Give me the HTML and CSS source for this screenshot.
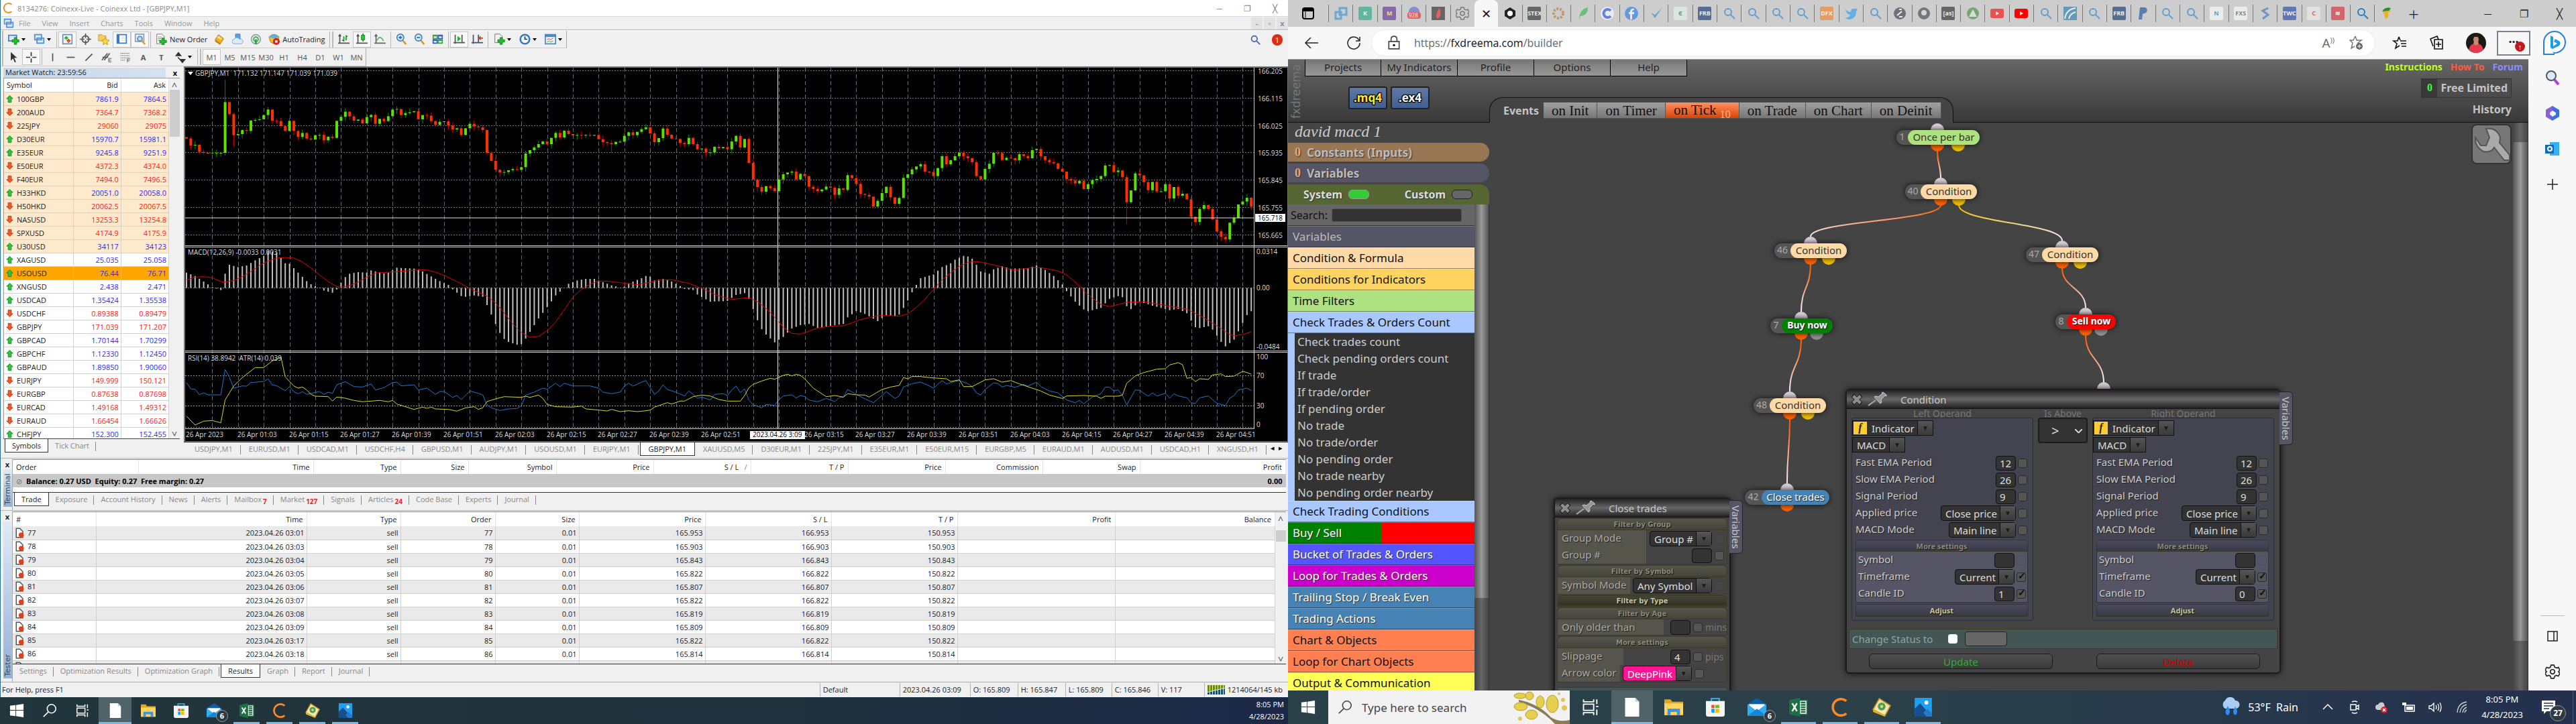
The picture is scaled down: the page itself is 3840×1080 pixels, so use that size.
FILE: index.html
```html
<!DOCTYPE html>
<html lang="en">
<head>
<meta charset="utf-8">
<title>Trading desktop</title>
<link rel="stylesheet" href="styles.css">
</head>
<body>
<svg class="sprite" aria-hidden="true">
  <symbol id="i-plus-chart" viewBox="0 0 20 20"><path d="M1 3h14v10H1z" fill="#dce9f7" stroke="#4b7fb5" stroke-width="2"/><path d="M11 7h4v4h4v4h-4v4h-4v-4H7v-4h4z" fill="#1fc12c" stroke="#0b7a17"/></symbol>
  <symbol id="i-profiles" viewBox="0 0 20 20"><path d="M2 2h12v9H2zM6 8h12v9H6z" fill="#dce9f7" stroke="#4b8fd5" stroke-width="2"/></symbol>
  <symbol id="i-watch" viewBox="0 0 20 20"><path d="M2 2h16v16H2z" fill="#fff" stroke="#5b93c9" stroke-width="2"/><path d="M4 8l4-4 4 4-4 3z" fill="#27b43a"/><path d="M8 12l4-3 4 3-4 5z" fill="#ef4d20"/></symbol>
  <symbol id="i-target" viewBox="0 0 20 20"><circle cx="10" cy="10" r="6" fill="none" stroke="#555" stroke-width="2"/><path d="M10 0v8M10 12v8M0 10h8M12 10h8" stroke="#555" stroke-width="2"/></symbol>
  <symbol id="i-star-folder" viewBox="0 0 20 20"><path d="M1 2h6l2 2h5v9H1z" fill="#f7cf58" stroke="#c79a22"/><path d="M13 7l2 4 5 1-4 3 1 5-4-3-4 3 1-5-4-3 5-1z" fill="#ffd93b" stroke="#c08f12"/></symbol>
  <symbol id="i-panel" viewBox="0 0 20 20"><path d="M2 2h16v15H2z" fill="#fff" stroke="#3d79c2" stroke-width="2"/><path d="M2 2h4v15H2z" fill="#3d79c2"/><path d="M9 6h8M9 9h8M9 12h8" stroke="#c6d5e6"/></symbol>
  <symbol id="i-tester" viewBox="0 0 20 20"><path d="M2 1h15v13H2z" fill="#e8eef5" stroke="#8aa2bd" stroke-width="2"/><circle cx="10" cy="9" r="4" fill="#bfe0fb" stroke="#4c86c4" stroke-width="2"/><path d="M13 12l6 7" stroke="#e0a22c" stroke-width="3"/></symbol>
  <symbol id="i-order" viewBox="0 0 20 20"><path d="M2 1h9l4 4v13H2z" fill="#fafafa" stroke="#666"/><path d="M4 6h7M4 9h6M4 12h4" stroke="#777"/><path d="M11 8h4v4h4v4h-4v4h-4v-4H7v-4h4z" fill="#1fc12c" stroke="#0b7a17"/></symbol>
  <symbol id="i-diamond" viewBox="0 0 20 20"><path d="M8 2l9 7-6 9-9-7z" fill="#f0b020" stroke="#a8700c"/><path d="M2 11l9 7v2l-9-6z" fill="#b87a14"/><path d="M8 4l6 5-2 2-7-4z" fill="#ffe08a"/></symbol>
  <symbol id="i-cloud" viewBox="0 0 20 20"><path d="M6 1h8v10H6z" fill="#4fa3e8" stroke="#2c75b8"/><path d="M4 18a4 4 0 0 1 0-8 5 5 0 0 1 9 0 4 4 0 0 1 3 8z" fill="#dcecfb" stroke="#6e9cc8"/></symbol>
  <symbol id="i-signal" viewBox="0 0 20 20"><circle cx="10" cy="10" r="8" fill="#e7efe9" stroke="#8ca5a0" stroke-width="2"/><circle cx="10" cy="10" r="4" fill="none" stroke="#3da24d" stroke-width="2"/><path d="M10 10v9" stroke="#2a9a3c" stroke-width="3"/></symbol>
  <symbol id="i-auto" viewBox="0 0 20 20"><path d="M1 6q9-9 18 0l-3 9q-6 5-12 0z" fill="#f3bd2c" stroke="#a37510"/><path d="M2 5q8-7 16 0l-4 3H6z" fill="#5ab0e4"/><circle cx="14" cy="14" r="6" fill="#df2216"/><path d="M12 12h4v4h-4z" fill="#fff"/></symbol>
  <symbol id="i-bars" viewBox="0 0 20 20"><path d="M3 2v16M0 17h20M1 5l2-3 2 3" stroke="#555" stroke-width="2" fill="none"/><path d="M10 5v9M14 3v9M10 12h-3M14 5h3" stroke="#159b22" stroke-width="2"/></symbol>
  <symbol id="i-candle" viewBox="0 0 20 20"><path d="M3 2v16M0 17h20M1 5l2-3 2 3" stroke="#555" stroke-width="2" fill="none"/><path d="M12 0v14" stroke="#157a22" stroke-width="2"/><path d="M9 3h6v8H9z" fill="#1fcf30" stroke="#157a22"/></symbol>
  <symbol id="i-line" viewBox="0 0 20 20"><path d="M3 2v16M0 17h20M1 5l2-3 2 3" stroke="#666" stroke-width="2" fill="none"/><path d="M4 13q6-12 12 0" stroke="#5fae68" stroke-width="2" fill="none"/></symbol>
  <symbol id="i-zin" viewBox="0 0 20 20"><circle cx="8" cy="7" r="6" fill="#d9efff" stroke="#3f82cc" stroke-width="2"/><path d="M5 7h6M8 4v6" stroke="#2468b4" stroke-width="2"/><path d="M12 12l6 7" stroke="#d29a2a" stroke-width="3"/></symbol>
  <symbol id="i-zout" viewBox="0 0 20 20"><circle cx="8" cy="7" r="6" fill="#d9efff" stroke="#3f82cc" stroke-width="2"/><path d="M5 7h6" stroke="#2468b4" stroke-width="2"/><path d="M12 12l6 7" stroke="#d29a2a" stroke-width="3"/></symbol>
  <symbol id="i-tile" viewBox="0 0 20 20"><path d="M1 2h9v8H1zM10 10h9v8h-9z" fill="#3aa92a"/><path d="M10 2h9v8h-9zM1 10h9v8H1z" fill="#2f63c4"/><path d="M3 5h5v3H3zM12 5h5v3h-5zM3 13h5v3H3zM12 13h5v3h-5z" fill="#e7f2ff"/></symbol>
  <symbol id="i-scroll" viewBox="0 0 20 20"><path d="M3 2v16M0 16h20M15 2v14" stroke="#555" stroke-width="2" fill="none"/><path d="M7 4l6 5-6 5z" fill="#1bb32b"/></symbol>
  <symbol id="i-shift" viewBox="0 0 20 20"><path d="M3 2v16M0 16h20M12 2v14" stroke="#456" stroke-width="2" fill="none"/><path d="M20 8h-7M16 5l-3 3 3 3" stroke="#c2452b" stroke-width="2" fill="none"/></symbol>
  <symbol id="i-ind" viewBox="0 0 20 20"><path d="M2 1h9l4 4v11H2z" fill="#f4f4f4" stroke="#666"/><path d="M11 7h4v4h4v4h-4v4h-4v-4H7v-4h4z" fill="#1fc12c" stroke="#0b7a17"/></symbol>
  <symbol id="i-clock" viewBox="0 0 20 20"><circle cx="10" cy="10" r="8" fill="#fff" stroke="#2f78cf" stroke-width="3"/><path d="M10 5v5h4" stroke="#234" stroke-width="2" fill="none"/></symbol>
  <symbol id="i-tpl" viewBox="0 0 20 20"><path d="M1 2h18v16H1z" fill="#eef5fc" stroke="#4a88c8" stroke-width="2"/><path d="M1 2h18v4H1z" fill="#4a88c8"/><path d="M4 11l3-2 3 2 5-3" stroke="#c33" fill="none"/><path d="M4 15l3-2 3 2 5-2" stroke="#2a2" fill="none"/></symbol>
  <symbol id="i-cursor" viewBox="0 0 20 20"><path d="M6 1v15l4-4 3 7 2-1-3-7h5z" fill="#333"/></symbol>
  <symbol id="i-cross" viewBox="0 0 20 20"><path d="M10 1v7M10 12v7M1 10h7M12 10h7" stroke="#333" stroke-width="2"/></symbol>
  <symbol id="i-vl" viewBox="0 0 20 20"><path d="M10 3v14" stroke="#555" stroke-width="2"/></symbol>
  <symbol id="i-hl" viewBox="0 0 20 20"><path d="M3 10h14" stroke="#555" stroke-width="2"/></symbol>
  <symbol id="i-tl" viewBox="0 0 20 20"><path d="M4 16L16 4" stroke="#555" stroke-width="2"/></symbol>
  <symbol id="i-eq" viewBox="0 0 20 20"><path d="M1 15L11 3M5 15L15 3M2 10h10" stroke="#555" stroke-width="2"/><path d="M13 12h5M13 15h4M13 18h5M13 12v6" stroke="#444"/></symbol>
  <symbol id="i-fib" viewBox="0 0 20 20"><path d="M2 3h16M2 7h16M2 11h16M2 15h9" stroke="#555" stroke-dasharray="2 1"/><path d="M14 13h5M14 16h4M14 13v6" stroke="#444"/></symbol>
  <symbol id="i-shapes" viewBox="0 0 20 20"><path d="M3 7l4-5 4 5zM10 14h8l-4 5zM6 10l5 5" fill="#333" stroke="#333" stroke-width="2"/></symbol>
  <symbol id="i-mag" viewBox="0 0 20 20"><circle cx="8" cy="8" r="5" fill="none" stroke="currentColor" stroke-width="2"/><path d="M12 12l6 6" stroke="currentColor" stroke-width="2"/></symbol>
  <symbol id="i-doc" viewBox="0 0 20 20"><path d="M3 1h7l6 6v12H3z" fill="#fff" stroke="#555" stroke-width="2"/><circle cx="13" cy="14" r="5" fill="#e2401a"/></symbol>
  <symbol id="i-gear" viewBox="0 0 20 20"><path d="M8 1h4l1 3 3 1 2-1 2 4-2 2 2 2-2 4-3-1-2 1-1 3H8l-1-3-2-1-3 1-2-4 2-2-2-2 2-4 3 1 2-1z" fill="none" stroke="currentColor" stroke-width="1.5"/><circle cx="10" cy="10" r="3" fill="none" stroke="currentColor" stroke-width="1.5"/></symbol>
  <symbol id="t-start" viewBox="0 0 24 24"><path d="M1 4l9-1v8H1zM11 3l12-2v10H11zM1 12h9v9l-9-1zM11 12h12v11l-12-2z" fill="#fff"/></symbol>
  <symbol id="t-mag" viewBox="0 0 24 24"><circle cx="15" cy="9" r="7" fill="none" stroke="currentColor" stroke-width="1.7"/><path d="M10 14L2 22" stroke="currentColor" stroke-width="1.7"/></symbol>
  <symbol id="t-view" viewBox="0 0 24 24"><path d="M3 2v3h13V2M3 22v-3h13v3M3 8h13v8H3zM20 2v6M20 15v7M19 11h3" fill="none" stroke="#fff" stroke-width="1.6"/></symbol>
  <symbol id="t-doc" viewBox="0 0 24 24"><path d="M3 0h13l5 5v19H3z" fill="#fff"/><path d="M16 0v5h5" fill="#ccc"/></symbol>
  <symbol id="t-folder" viewBox="0 0 24 24"><path d="M0 2h8l2 3h14v17H0z" fill="#e2a51e"/><path d="M0 7h24v15H0z" fill="#ffd562"/><path d="M4 22v-8h16v8h-4v-4H8v4z" fill="#3d93de"/></symbol>
  <symbol id="t-store" viewBox="0 0 24 24"><path d="M7 5V1h10v4" fill="none" stroke="#29a9ea" stroke-width="2"/><path d="M0 4h24v17q0 3-3 3H3q-3 0-3-3z" fill="#f5f5f5"/><path d="M7 9h4v4H7z" fill="#f25022"/><path d="M12 9h5v4h-5z" fill="#7fba00"/><path d="M7 14h4v5H7z" fill="#00a4ef"/><path d="M12 14h5v5h-5z" fill="#ffb900"/></symbol>
  <symbol id="t-mail" viewBox="0 0 24 24"><path d="M0 8l12-8 12 8v15H0z" fill="#0a5ea8"/><path d="M2 8h20v9H2z" fill="#fff"/><path d="M0 8l12 9 12-9v15H0z" fill="#2fb0f2"/><path d="M0 23l12-9 12 9z" fill="#1287d8"/></symbol>
  <symbol id="t-excel" viewBox="0 0 24 24"><path d="M12 3h11v18H12z" fill="#fff" stroke="#1d7044" stroke-width="1.5"/><path d="M15 6h6M15 9h6M15 12h6M15 15h6M15 18h6" stroke="#1d7044" stroke-width="2"/><path d="M0 3l14-3v24L0 21z" fill="#1d7044"/><path d="M4 7l6 10M10 7L4 17" stroke="#fff" stroke-width="2"/></symbol>
  <symbol id="t-c" viewBox="0 0 24 24"><path d="M20 4a10.500 10.500 0 1 0 0 16" fill="none" stroke="#ff8a1c" stroke-width="3"/></symbol>
  <symbol id="t-mt" viewBox="0 0 24 24"><path d="M9 1l14 9-7 13L1 15z" fill="#f4e7b0" stroke="#c99b1e" stroke-width="1.500"/><path d="M1 15l15 8v1L1 18z" fill="#e3b521"/><circle cx="12" cy="11" r="5" fill="#4b9d5c"/><circle cx="12" cy="11" r="2" fill="#e9d463"/></symbol>
  <symbol id="t-photo" viewBox="0 0 24 24"><path d="M1 0h22v24H1z" fill="#1f9ff0"/><path d="M1 14l7-7 15 17H1z" fill="#174e8c"/><path d="M12 19l5-5 6 6v4h-7z" fill="#2a77c4"/><circle cx="16" cy="6" r="2.500" fill="#fff"/></symbol>
  <symbol id="i-pin" viewBox="0 0 30 24"><path d="M1 21l11-8" stroke="#aaa" stroke-width="2"/><path d="M10 8l9 10 2-2-1-4 6-6 2 1v-2L23 1l-2 1 1 1-6 5-4-1z" fill="#8f979c" stroke="#c6cdd1"/></symbol>
  <symbol id="i-x" viewBox="0 0 20 20"><path d="M3 3l14 14M17 3L3 17" stroke="#1c1c1c" stroke-width="7"/><path d="M4 4l12 12M16 4L4 16" stroke="#8d8d8d" stroke-width="5"/></symbol>
</svg>

<main class="desktop">
<section class="screen">
  <div class="mt">
    <header class="mt-title"><svg class="logo"><use href="#t-c"/></svg><span>8134276: Coinexx-Live - Coinexx Ltd - [GBPJPY,M1]</span>
      <div class="mt-win"><button aria-label="Minimize">─</button><button aria-label="Restore">❐</button><button aria-label="Close">╳</button></div></header>
    <nav class="mt-menu"><svg class="logo"><use href="#i-profiles"/></svg><a href="#">File</a><a href="#">View</a><a href="#">Insert</a><a href="#">Charts</a><a href="#">Tools</a><a href="#">Window</a><a href="#">Help</a>
      <div class="mdi"><button aria-label="Minimize chart">-</button><button aria-label="Restore chart">▫</button><button aria-label="Close chart">x</button></div></nav>
    <div class="tools">
      <div class="toolbar" id="toolbar1"></div>
      <div class="alerts"><svg class="ic blue"><use href="#i-mag"/></svg><span class="bubble">1</span></div>
    </div>
    <div class="tools second"><div class="toolbar" id="toolbar2"></div></div>

    <div class="mt-main">
      <section class="watch">
        <h2>Market Watch: 23:59:56 <button aria-label="Close Market Watch">x</button></h2>
        <div class="watch-list">
          <table><thead><tr><th>Symbol</th><th>Bid</th><th>Ask</th></tr></thead><tbody id="quotes"></tbody></table>
          <div class="vbar"><span>^</span><i></i><span class="dn">^</span></div>
        </div>
        <div class="tabs"><button class="on">Symbols</button><button>Tick Chart</button></div>
      </section>
      <section class="chart-col">
        <div class="chart"><svg id="chart" role="img" aria-label="GBPJPY M1 chart"></svg></div>
        <div class="tabs chart-tabs"><button>USDJPY,M1</button><button>EURUSD,M1</button><button>USDCAD,M1</button><button>USDCHF,H4</button><button>GBPUSD,M1</button><button>AUDJPY,M1</button><button>USOUSD,M1</button><button>EURJPY,M1</button><button class="on">GBPJPY,M1</button><button>XAUUSD,M5</button><button>D30EUR,M1</button><button>225JPY,M1</button><button>E35EUR,M1</button><button>E50EUR,M15</button><button>EURGBP,M5</button><button>EURAUD,M1</button><button>AUDUSD,M1</button><button>USDCAD,H1</button><button>XNGUSD,H1</button><span class="arrows">◂ &nbsp;▸</span></div>
      </section>
    </div>

    <section class="dock terminal">
      <div class="rail"><button aria-label="Close Terminal">x</button><span>Terminal</span></div>
      <div class="dock-body">
        <table>
          <colgroup><col class="w187"><col class="w261"><col class="w130"><col class="w101"><col class="w131"><col class="w145"><col class="w145"><col class="w145"><col class="w145"><col class="w145"><col class="w145"><col></colgroup>
          <thead><tr><th>Order</th><th>Time</th><th>Type</th><th>Size</th><th>Symbol</th><th>Price</th><th>S / L &nbsp; <small>/</small></th><th>T / P</th><th>Price</th><th>Commission</th><th>Swap</th><th>Profit</th></tr></thead>
          <tbody><tr class="balance"><td colspan="11"><span class="nil">⊘</span>Balance: 0.27 USD&nbsp; Equity: 0.27&nbsp; Free margin: 0.27</td><td>0.00</td></tr></tbody>
        </table>
        <div class="tabs"><button class="on">Trade</button><button>Exposure</button><button>Account History</button><button>News</button><button>Alerts</button><button>Mailbox<sub>7</sub></button><button>Market<sub>127</sub></button><button>Signals</button><button>Articles<sub>24</sub></button><button>Code Base</button><button>Experts</button><button>Journal</button></div>
      </div>
    </section>

    <section class="dock tester">
      <div class="rail"><button aria-label="Close Tester">x</button><span>Tester</span></div>
      <div class="dock-body">
        <div class="tester-list">
          <table>
            <colgroup><col class="w124"><col class="w314"><col class="w140"><col class="w141"><col class="w125"><col class="w188"><col class="w188"><col class="w188"><col class="w235"><col></colgroup>
            <thead><tr><th>#</th><th>Time</th><th>Type</th><th>Order</th><th>Size</th><th>Price</th><th>S / L</th><th>T / P</th><th>Profit</th><th>Balance</th></tr></thead>
            <tbody id="results"></tbody>
          </table>
          <div class="vbar short"><span>^</span><i></i><span class="dn">^</span></div>
        </div>
        <div class="tabs"><button>Settings</button><button>Optimization Results</button><button>Optimization Graph</button><button class="on">Results</button><button>Graph</button><button>Report</button><button>Journal</button></div>
      </div>
    </section>

    <footer class="status"><span class="help">For Help, press F1</span><span class="w119">Default</span><span class="w105">2023.04.26 03:09</span><span class="w71">O: 165.809</span><span class="w71">H: 165.847</span><span class="w69">L: 165.809</span><span class="w69">C: 165.846</span><span class="w69">V: 117</span><span class="conn"><svg viewBox="0 0 26 14"><path d="M0 0h26v4L0 10z" fill="#6c8a10"/><path d="M0 11l26-6v9H0z" fill="#12506e"/><path d="M3.500 0v14M7.500 0v14M11.500 0v14M15.500 0v14M19.500 0v14M23.500 0v14" stroke="#f0f0f0"/></svg>1214064/145 kb</span></footer>
  </div>
  <footer class="taskbar small">
    <div class="apps" data-apps></div>
    <div class="clock"><span>8:05 PM</span><span>4/28/2023</span></div>
  </footer>
</section>

<section class="screen right">
  <div class="tabstrip">
    <svg class="tabact" viewBox="0 0 20 20"><rect x="2" y="2" width="16" height="16" rx="3" fill="none" stroke="#000" stroke-width="2"/><path d="M2 3h16v4H2z"/><path d="M6 6v12" stroke="#000"/></svg>
    <div class="favs" id="favs"></div>
    <button class="newtab" aria-label="New tab">+</button>
    <div class="winbtns"><button aria-label="Minimize window">─</button><button aria-label="Restore window">❐</button><button aria-label="Close window">╳</button></div>
  </div>
  <div class="navbar">
    <button aria-label="Back"><svg viewBox="0 0 22 22"><path d="M21 11H2M10 3l-8 8 8 8" fill="none" stroke="#222" stroke-width="1.500"/></svg></button>
    <button aria-label="Refresh"><svg viewBox="0 0 22 22"><path d="M19 7a9 9 0 1 0 1 4M20 2v6h-6" fill="none" stroke="#222" stroke-width="1.500"/></svg></button>
    <div class="url"><svg viewBox="0 0 20 20"><path d="M3 8h14v10H3zM6 8V5q0-4 4-4t4 4v3" fill="none" stroke="#444" stroke-width="1.500"/><circle cx="10" cy="13" r="1.500"/></svg>
      <a href="#">https://<b>fxdreema.com</b>/builder</a>
      <span class="read">A<sup>))</sup></span>
      <svg viewBox="0 0 22 22"><path d="M9 1l2 6h7l-5 4 1 4M9 1L6 7H1l4 4-2 8 5-3" fill="none" stroke="#777" stroke-width="1.500"/><circle cx="15" cy="16" r="5" fill="#666"/><path d="M12 16h6M15 13v6" stroke="#fff"/></svg></div>
    <div class="navicons">
      <button aria-label="Favorites"><svg viewBox="0 0 22 22"><path d="M10 2L8 8H2l5 4-2 7 6-4M10 2l2 5M12 8h9M13 12h8M14 16h7" fill="none" stroke="#111" stroke-width="1.600"/></svg></button>
      <button aria-label="Collections"><svg viewBox="0 0 22 22"><path d="M6 16l-4-11 10-4 2 5M8 6h12v14H8zM14 9v8M10 13h8" fill="none" stroke="#111" stroke-width="1.600"/></svg></button>
      <svg class="avatar" viewBox="0 0 30 30"><circle cx="15" cy="15" r="15" fill="#181a16"/><path d="M4 25q2-8 8-9h6q6 1 8 9-5 5-11 5T4 25z" fill="#e63a4c"/><path d="M11 16q4 5 8 0l-1-3h-6z" fill="#c78a6d"/><ellipse cx="15" cy="10" rx="4" ry="5" fill="#c78a6d"/><path d="M10 9q0-6 5-6t5 6l-2-3h-6z" fill="#281b14"/></svg>
      <button class="more" aria-label="Settings and more">···<i>↑</i></button>
      <svg class="bing" viewBox="0 0 38 38"><circle cx="20" cy="18" r="16" fill="#fff" stroke="#2c7de0" stroke-width="2"/><path d="M4 18v18h16" fill="#fff" stroke="#2c7de0" stroke-width="2"/><path d="M14 8l4 2v14l6-4-5-3 2-4 7 4q2 6-5 8l-6 3-3-2z" fill="#16a0e4"/></svg>
    </div>
  </div>

  <div class="browser">
    <div class="page">
      <header class="head">
        <span class="brand">fxdreema</span>
        <nav class="menu"><a href="#">Projects</a><a href="#">My Indicators</a><a href="#">Profile</a><a href="#">Options</a><a href="#">Help</a></nav>
        <div class="dl"><button class="mq">.mq4</button><button>.ex4</button></div>
        <div class="events"><b>Events</b><button>on Init</button><button>on Timer</button><button class="on">on Tick <sub>10</sub></button><button>on Trade</button><button>on Chart</button><button>on Deinit</button></div>
        <div class="account">
          <p><a href="#" class="c1">Instructions</a><a href="#" class="c2">How To</a><a href="#" class="c3">Forum</a></p>
          <div class="plan"><span>0</span><b>Free Limited</b></div>
          <a href="#" class="hist">History</a>
        </div>
      </header>
      <div class="work">
        <aside class="side">
          <h1>david macd 1</h1>
          <div class="bar brown"><i>0</i>Constants (Inputs)</div>
          <div class="bar slate"><i>0</i>Variables</div>
          <div class="bar olive"><label>System <input type="checkbox" checked></label><label>Custom <input type="checkbox"></label></div>
          <div class="side-scroll">
            <div class="cats">
              <label class="find">Search: <input type="text"></label>
              <a href="#" class="cat k-var">Variables</a>
              <a href="#" class="cat k-cond">Condition &amp; Formula</a>
              <a href="#" class="cat k-ind">Conditions for Indicators</a>
              <a href="#" class="cat k-time">Time Filters</a>
              <a href="#" class="cat k-chk">Check Trades &amp; Orders Count</a>
              <ul><li>Check trades count</li><li>Check pending orders count</li><li>If trade</li><li>If trade/order</li><li>If pending order</li><li>No trade</li><li>No trade/order</li><li>No pending order</li><li>No trade nearby</li><li>No pending order nearby</li></ul>
              <a href="#" class="cat k-chk">Check Trading Conditions</a>
              <a href="#" class="cat lt k-buy">Buy / Sell</a>
              <a href="#" class="cat lt k-bucket">Bucket of Trades &amp; Orders</a>
              <a href="#" class="cat lt k-loop">Loop for Trades &amp; Orders</a>
              <a href="#" class="cat lt k-steel">Trailing Stop / Break Even</a>
              <a href="#" class="cat lt k-steel">Trading Actions</a>
              <a href="#" class="cat k-coral">Chart &amp; Objects</a>
              <a href="#" class="cat k-coral">Loop for Chart Objects</a>
              <a href="#" class="cat k-out">Output &amp; Communication</a>
            </div>
            <div class="scroll"><i></i></div>
          </div>
        </aside>
        <div class="canvas" id="canvas">
          <svg id="edges" aria-hidden="true"></svg>
          <button class="wrench" aria-label="Project settings"><svg viewBox="0 0 56 56"><path d="M20 5q16-2 21 13l-1 8 15 18v8h-8L32 33q-4 8-16 6Q3 32 4 18l8 12h8l5-12z" fill="#aaa" stroke="#555" stroke-width="2"/></svg></button>

          <form class="win close">
            <div class="win-title"><svg class="x"><use href="#i-x"/></svg><svg><use href="#i-pin"/></svg><span>Close trades</span></div><span class="vtab">Variables</span>
            <fieldset><legend>Filter by Group</legend>
              <div class="row r1"><label for="gm">Group Mode</label><span class="pick"><select id="gm"><option>Group #</option></select></span><input type="checkbox" class="dim" aria-label="Group Mode option"></div>
              <div class="row r1"><label for="gn">Group #</label><input id="gn" type="text"><input type="checkbox" aria-label="Group # option"></div></fieldset>
            <fieldset><legend>Filter by Symbol</legend>
              <div class="row r2"><label for="sm">Symbol Mode</label><span class="pick"><select id="sm"><option>Any Symbol</option></select></span><input type="checkbox" class="dim" aria-label="Symbol Mode option"></div></fieldset>
            <fieldset class="lit"><legend>Filter by Type</legend></fieldset>
            <fieldset><legend>Filter by Age</legend>
              <div class="row r3"><label for="ot">Only older than</label><input id="ot" type="text"><input type="checkbox" aria-label="Only older than option"><em>mins</em></div></fieldset>
            <fieldset><legend>More settings</legend>
              <div class="row r4"><label for="sl">Slippage</label><input id="sl" type="text" value="4"><input type="checkbox" aria-label="Slippage option"><em>pips</em></div>
              <div class="row r4"><label for="ac">Arrow color</label><span class="pick pink"><select id="ac"><option>DeepPink</option></select></span><input type="checkbox" aria-label="Arrow color option"><em></em></div></fieldset>
            <div class="teal"></div>
          </form>

          <form class="win cond">
            <div class="win-title"><svg class="x"><use href="#i-x"/></svg><svg><use href="#i-pin"/></svg><span>Condition</span></div><span class="vtab">Variables</span>
            <div class="ops">
              <span class="cap">Left Operand</span><span class="cap">Is Above</span><span class="cap">Right Operand</span>
              <div class="operand" data-side="left" data-candle="1"></div>
              <select class="cmp" aria-label="Comparison"><option>&gt;</option></select>
              <div class="operand" data-side="right" data-candle="0"></div>
            </div>
            <div class="teal"><label for="cs">Change Status to</label><input type="checkbox" class="white" aria-label="Enable status change"><input id="cs" type="text"></div>
            <div class="actions"><button type="button" class="update">Update</button><button type="button" class="delete">Delete</button></div>
          </form>
        </div>
        <div class="scroll page-scroll"><i></i></div>
      </div>
    </div>
    <aside class="edgebar">
      <svg viewBox="0 0 22 22"><circle cx="9" cy="8" r="7" fill="#d6ecfb" stroke="#555" stroke-width="2"/><path d="M14 14l6 7" stroke="#b43be0" stroke-width="4"/></svg>
      <svg viewBox="0 0 22 22"><path d="M11 0l10 6v10l-10 6-10-6V6z" fill="#3c6fe0"/><path d="M1 6l10-6v7L7 9v7l4 6-10-6z" fill="#8a5fd8"/><path d="M11 7l5 3v3l-5 3-4-3v-3z" fill="#f7f7f7"/></svg>
      <svg viewBox="0 0 22 22"><path d="M7 1h14v20H7z" fill="#35b3ee"/><path d="M0 5h13v13H0z" fill="#0f6cbd"/><circle cx="7" cy="11" r="3" fill="none" stroke="#fff" stroke-width="2"/></svg>
      <svg viewBox="0 0 22 22"><path d="M11 3v16M3 11h16" stroke="#222" stroke-width="1.500"/></svg>
      <hr>
      <svg viewBox="0 0 22 22"><path d="M4 4h14v14H4zM13 4v14" fill="none" stroke="#222" stroke-width="1.500"/></svg>
      <svg class="dark"><use href="#i-gear"/></svg>
    </aside>
  </div>

  <footer class="taskbar big">
    <button class="start" aria-label="Start"><svg><use href="#t-start"/></svg></button>
    <label class="search"><svg><use href="#t-mag"/></svg><input type="text" placeholder="Type here to search" aria-label="Type here to search">
      <svg class="branch" viewBox="0 0 84 50"><path d="M8 14q30 6 48 26 12 8 28 4v6H62Q40 26 8 17z" fill="#8c7a50"/><g fill="#e5cf4e" stroke="#b79c2a"><ellipse cx="10" cy="8" rx="9" ry="4"/><ellipse cx="24" cy="8" rx="6" ry="6"/><ellipse cx="11" cy="24" rx="10" ry="6"/><ellipse cx="40" cy="17" rx="6" ry="9"/><ellipse cx="58" cy="20" rx="9" ry="13"/><ellipse cx="27" cy="36" rx="9" ry="7"/></g><g fill="#e0c65a"><circle cx="74" cy="14" r="3"/><circle cx="76" cy="26" r="4"/><circle cx="10" cy="42" r="3"/><circle cx="68" cy="5" r="2"/></g></svg></label>
    <div class="apps" data-apps></div>
    <div class="weather"><svg viewBox="0 0 32 28"><path d="M8 16a7 7 0 0 1 0-12 8 8 0 0 1 15 0 6 6 0 0 1 1 12z" fill="#a9cdf5"/><path d="M12 12q6 10 0 14-7-3 0-14zM23 13q6 9 0 13-6-4 0-13z" fill="#2f8cf0"/></svg>53°F&nbsp; Rain</div>
    <div class="tray">
      <svg viewBox="0 0 20 20"><path d="M3 13l7-7 7 7" fill="none" stroke="#fff" stroke-width="1.500"/></svg>
      <svg viewBox="0 0 20 20"><path d="M4 6h8v8H4zM12 9l4-2v6l-4-2M6 2q4-2 8 0M6 18q4 2 8 0" fill="none" stroke="#fff" stroke-width="1.400"/></svg>
      <svg viewBox="0 0 20 20"><path d="M5 14a4 4 0 0 1 0-8 5 5 0 0 1 9-1l2 9z" fill="#c9ccd0"/><circle cx="14" cy="14" r="5" fill="#d6202b"/><path d="M12 12l4 4M16 12l-4 4" stroke="#fff" stroke-width="1.500"/></svg>
      <svg viewBox="0 0 20 20"><path d="M5 7h14v9H5z" fill="none" stroke="#fff" stroke-width="1.500"/><path d="M7 9h10v5H7zM1 3h6v4H1z" fill="#fff"/></svg>
      <svg viewBox="0 0 20 20"><path d="M1 8h3l4-4v12l-4-4H1zM11 7q2 3 0 6M14 5q3 5 0 10M17 3q4 7 0 14" fill="none" stroke="#fff" stroke-width="1.300"/></svg>
      <svg viewBox="0 0 20 20"><path d="M17 2Q4 4 3 18M17 6Q8 8 7 18M17 10q-5 2-6 8M17 14q-2 1-3 4" fill="none" stroke="#ccc" stroke-width="1.400"/></svg>
    </div>
    <div class="clock"><span>8:05 PM</span><span>4/28/2023</span></div>
    <button class="note" aria-label="Notifications"><svg viewBox="0 0 22 22"><path d="M1 1h20v16H8l-4 4v-4H1z" fill="#fff"/><path d="M4 5h14M4 9h14M4 13h8" stroke="#233248" stroke-width="1.500"/></svg><i class="badge">27</i></button>
  </footer>
</section>
</main>
<script src="app.js"></script>
</body>
</html>
```

FILE: styles.css
```css
* { box-sizing: border-box; }
body { margin: 0; font-family: "Open Sans", sans-serif; font-size: 11px; color: #222; overflow: hidden; }
button, input, select { font: inherit; color: inherit; margin: 0; padding: 0; border: 0; background: none; }
a { color: inherit; text-decoration: none; }
table { border-collapse: collapse; table-layout: fixed; width: 100%; }
svg { flex: none; display: block; }
.sprite { display: none; }
.desktop { display: grid; grid-template-columns: 1fr 1fr; height: 100vh; }
.screen { display: flex; flex-direction: column; min-width: 0; min-height: 0; height: 100vh; overflow: hidden; }

/* ---------- trading terminal ---------- */
.mt { flex: 1; min-height: 0; display: flex; flex-direction: column; background: #f0f0f0; border-left: 1px solid #2d6f93; }
.mt-title { height: 24px; background: #fff; color: #8a8a8a; display: flex; align-items: center; gap: 6px; padding: 0 16px 0 3px; }
.mt-title .logo { width: 16px; height: 16px; }
.mt-win { margin-left: auto; display: flex; gap: 32px; font-size: 12px; color: #777; }
.mt-menu { height: 21px; border-top: 1px solid #d8d8d8; border-bottom: 1px solid #b5b5b5; display: flex; align-items: center; gap: 17px; padding-left: 4px; color: #999; }
.mt-menu .logo { width: 16px; height: 16px; margin-right: -10px; }
.mdi { margin-left: auto; display: flex; gap: 2px; }
.mdi button { width: 17px; height: 18px; background: #e2e2e2; color: #7d94aa; font-weight: bold; }
.tools { height: 27px; display: flex; justify-content: space-between; border-top: 1px solid #fff; }
.toolbar { display: flex; align-items: center; border-right: 1px solid #aaa; border-bottom: 1px solid #ccc; padding-left: 5px; background: linear-gradient(90deg, transparent 2px, #bbb 2px, #bbb 4px, transparent 4px); }
.toolbar button { width: 27px; height: 24px; display: flex; align-items: center; justify-content: center; color: #555; flex: none; }
.toolbar button.drop { width: 38px; gap: 3px; }
.toolbar button.drop::after { content: ""; border: 3px solid transparent; border-top: 4px solid #000; border-bottom: 0; }
.toolbar button.text { width: auto; gap: 4px; padding: 0 5px; color: #222; }
.toolbar button.on { background: #f8f8f8; border: 1px solid #c4c4c4; }
.toolbar i { width: 1px; height: 24px; background: #b5b5b5; margin: 0 2px; }
.toolbar i.grip { width: 8px; margin: 0 0 0 2px; background: linear-gradient(90deg, #b5b5b5 1px, transparent 1px, transparent 4px, #bbb 4px, #bbb 6px, transparent 6px); }
.ic { width: 17px; height: 17px; }
.blue { color: #3a64b8; }
.alerts { display: flex; align-items: center; gap: 16px; padding-right: 8px; }
.bubble { background: #dd2c18; color: #fff; border-radius: 9px; width: 16px; height: 17px; text-align: center; line-height: 17px; }
.second { border-top: 0; }

.mt-main { flex: 1; min-height: 0; display: flex; gap: 4px; padding-bottom: 4px; }
.watch { width: 269px; padding: 2px 2px 0 4px; display: flex; flex-direction: column; }
.watch h2 { margin: 0; font-size: 11px; font-weight: normal; height: 15px; line-height: 14px; padding-left: 3px; background: linear-gradient(90deg, #c6d7e8, #d3e2f0 92%, #f0f0f0 92%); display: flex; justify-content: space-between; }
.watch h2 button { width: 14px; color: #000; font-weight: bold; line-height: 12px; }
.watch-list { flex: 1; min-height: 0; overflow: hidden; display: flex; border: 1px solid #999; border-right: 0; border-bottom: 1px solid #444; background: #fff; }
.watch-list table { width: 246px; align-self: flex-start; }
.watch th { height: 20px; font-weight: normal; text-align: right; padding: 0 4px; border-right: 1px solid #ddd; }
.watch th:first-child { width: 42%; }
.watch th:first-child, .watch td:first-child { text-align: left; }
.watch td { height: 20px; padding: 0 3px; text-align: right; border: 1px solid #d4d0cc; border-left: 0; white-space: nowrap; }
.watch tr.tan td { background: #ffe9cd; }
.watch tr.hot td { background: #ffa500; border-color: #ffb733; }
.rise .n { color: #2a2aff; }
.fall .n { color: #ff2020; }
.watch td svg { width: 11px; height: 13px; display: inline-block; vertical-align: -2px; margin-right: 5px; }
.vbar { width: 16px; background: #f0f0f0; display: flex; flex-direction: column; align-items: center; color: #444; padding-top: 3px; }
.vbar span { height: 14px; line-height: 18px; font-size: 14px; }
.vbar i { width: 15px; height: 70px; background: #cdcdcd; }
.vbar .dn { transform: rotate(180deg); margin-top: auto; }
.vbar.short i { height: 17px; margin-top: 10px; }
.tabs { display: flex; height: 24px; color: #888; flex: none; }
.tabs button { padding: 0 10px; height: 20px; line-height: 18px; position: relative; white-space: nowrap; }
.tabs button::after { content: ""; position: absolute; right: 0; top: 4px; height: 14px; border-right: 1px solid #888; }
.tabs button.on { background: #fff; color: #222; border: 1px solid #333; border-top: 0; padding: 0 10px; margin-left: 2px; }
.tabs button.on::after { display: none; }
.tabs sub { color: #f0202c; font-weight: bold; font-size: 10px; margin-left: 2px; line-height: 10px; }
.chart-col { flex: 1; min-width: 0; display: flex; flex-direction: column; }
.chart { flex: 1; min-height: 0; background: #000; border: solid #777; border-width: 2px 1px 1px 2px; }
.chart svg { width: 100%; height: 100%; font-size: 10px; }
.chart-tabs { height: 20px; border-top: 1px solid #333; padding-left: 4px; font-size: 11px; }
.chart-tabs button, .chart-tabs button.on { padding: 0 12px; }
.arrows { margin-left: auto; padding-right: 8px; color: #000; }

.dock { display: flex; border-top: 1px solid #b5b5b5; padding: 1px 3px 0 3px; }
.terminal { height: 78px; }
.tester { height: 256px; }
.rail { width: 14px; display: flex; flex-direction: column; align-items: center; }
.rail button { height: 15px; line-height: 10px; font-weight: bold; }
.rail span { flex: 1; width: 13px; line-height: 13px; writing-mode: vertical-rl; transform: rotate(180deg); background: linear-gradient(0deg, #dfeaf6, #93b0d6); margin-bottom: 5px; padding-top: 3px; font-family: "DejaVu Sans", sans-serif; color: #444; font-size: 11px; }
.dock-body { flex: 1; min-width: 0; display: flex; flex-direction: column; border-top: 1px solid #888; border-left: 1px solid #aaa; background: #fff; }
.dock-body .tabs { background: #f0f0f0; border-top: 1px solid #333; margin-top: auto; height: 27px; }
.dock th { font-weight: normal; text-align: right; padding: 0 5px; height: 21px; border-right: 1px solid #e5e5e5; white-space: nowrap; }
.dock td { text-align: right; padding: 0 3px; height: 20px; }
.dock th:first-child, .dock td:first-child { text-align: left; }
.dock small { color: #777; font-size: 10px; }
.balance td { background: #c8c8c8; font-weight: bold; color: #000; }
.dock .balance td { font-size: 11px; padding: 0 5px; }
.nil { color: #777; font-weight: normal; margin-right: 6px; }
.w187 { width: 187px; } .w261 { width: 261px; } .w130 { width: 130px; } .w101 { width: 101px; } .w131 { width: 131px; } .w145 { width: 145px; }
.w124 { width: 124px; } .w314 { width: 314px; } .w140 { width: 140px; } .w141 { width: 141px; } .w125 { width: 125px; } .w188 { width: 188px; } .w235 { width: 235px; }
.tester-list { flex: 1; min-height: 0; overflow: hidden; display: flex; }
.tester-list table { align-self: flex-start; flex: 1; }
.tester td { border-right: 1px solid #d0d0d0; border-bottom: 1px solid #d0d0d0; }
.tester tr:nth-child(odd) td { background: #eaeaea; }
.tester td svg { width: 15px; height: 16px; display: inline-block; vertical-align: -4px; margin-right: 4px; }
.status { height: 23px; border-top: 1px solid #aaa; display: flex; align-items: center; }
.status span { border-left: 1px solid #b0b0b0; padding-left: 4px; line-height: 20px; white-space: nowrap; }
.status .help { border: 0; padding-left: 2px; margin-right: auto; }
.w119 { width: 119px; } .w105 { width: 105px; } .w71 { width: 71px; } .w69 { width: 69px; }
.status .conn { display: flex; align-items: center; gap: 4px; padding-right: 8px; }
.conn svg { width: 26px; height: 14px; }

/* ---------- taskbars ---------- */
.taskbar { display: flex; align-items: stretch; color: #fff; background: linear-gradient(90deg, #22363c, #1f313c 60%, #1a2847); }
.taskbar.small { height: 40px; }
.taskbar.big { height: 50px; background: linear-gradient(90deg, #2b4148, #2a3f48 50%, #24304f); }
.apps { display: flex; }
.apps button { width: 49px; display: flex; align-items: center; justify-content: center; position: relative; }
.apps svg { width: 22px; height: 22px; }
.apps .open::after { content: ""; position: absolute; left: 5px; right: 5px; bottom: 0; height: 3px; background: #76b9ed; }
.apps .focus { background: #4f6369; box-shadow: inset 0 -3px #76b9ed; }
.badge { position: absolute; right: 3px; bottom: 3px; width: 18px; height: 18px; border-radius: 50%; background: #2c3a42; border: 1px solid #999; font-style: normal; font-weight: bold; font-size: 11px; line-height: 16px; text-align: center; }
.clock { display: flex; flex-direction: column; justify-content: center; text-align: center; line-height: 18px; }
.small .clock { margin-left: auto; padding-right: 6px; text-align: right; }
.big .apps button { width: 62px; }
.big .apps svg { width: 28px; height: 28px; }
.big .apps .first { display: none; }
.big .clock { font-size: 13px; line-height: 23px; width: 76px; }
.start { width: 60px; display: flex; align-items: center; justify-content: center; }
.start svg { width: 22px; height: 22px; }
.search { width: 360px; background: #f2f2f2; color: #444; display: flex; align-items: center; gap: 14px; padding-left: 14px; font-size: 17px; }
.search svg { width: 22px; height: 22px; }
.search input { flex: 1; min-width: 0; }
.search input::placeholder { color: #444; opacity: 1; }
.search .branch { width: 84px; height: 50px; }
.weather { margin-left: auto; display: flex; align-items: center; gap: 10px; font-size: 16px; }
.weather svg { width: 32px; height: 30px; }
.tray { display: flex; align-items: center; gap: 20px; padding: 0 12px 0 34px; }
.tray svg { width: 20px; height: 20px; }
.note { position: relative; width: 68px; padding-left: 20px; border-right: 1px solid #4a5a70; margin-right: 4px; }
.note svg { width: 22px; height: 22px; }
.note .badge { right: 10px; bottom: 4px; width: 24px; height: 24px; font-size: 12px; line-height: 22px; }

/* ---------- browser chrome ---------- */
.right { background: #f7f7f7; font-family: "Noto Sans", sans-serif; }
.tabstrip { height: 40px; background: #cdcdcd; display: flex; align-items: center; flex: none; }
.tabact { width: 20px; height: 20px; margin: 0 20px; }
.favs { flex: 0 0 1596px; display: flex; align-self: stretch; align-items: center; }
.favs a { flex: 1; height: 26px; border-left: 1px solid #777; display: flex; align-items: center; justify-content: center; }
.favs a.on { height: 40px; background: #f7f7f7; border: 0; border-radius: 8px 8px 0 0; font-size: 18px; color: #111; }
.favs a.on + a { border-left: 0; }
.favs svg { width: 20px; height: 20px; }
.favs span { display: block; width: 20px; height: 20px; border-radius: 2px; font-weight: bold; font-size: 9px; line-height: 20px; text-align: center; overflow: hidden; }
.fade { opacity: .6; }
.newtab { font-size: 28px; width: 44px; font-family: "Open Sans", sans-serif; font-weight: 300; }
.winbtns { margin-left: auto; display: flex; gap: 42px; padding-right: 20px; font-size: 15px; }
.navbar { height: 48px; display: flex; align-items: center; flex: none; }
.navbar button { width: 55px; display: flex; justify-content: center; }
.navbar svg { width: 22px; height: 22px; }
.navbar > button:first-child { width: 70px; }
.url { flex: 1; height: 38px; border-radius: 19px; background: #fff; display: flex; align-items: center; padding: 0 16px 0 22px; color: #666; font: 16px "Open Sans", sans-serif; box-shadow: 0 0 3px #ddd; }
.url a { margin: 0 auto 0 19px; }
.url b { font-weight: normal; color: #111; }
.read { font-size: 19px; margin-right: 22px; }
.read sup { font-size: 11px; }
.navicons { display: flex; align-items: center; padding-left: 9px; width: 300px; }
.navicons .avatar { width: 30px; height: 30px; margin: 0 16px 0 17px; }
.navicons .more { width: 50px; height: 37px; border: 2px solid #78808c; position: relative; font-size: 18px; font-weight: bold; line-height: 28px; }
.more i { position: absolute; right: 6px; bottom: 4px; width: 15px; height: 15px; border-radius: 50%; background: #c4161c; color: #fff; font-size: 11px; line-height: 15px; font-style: normal; text-align: center; }
.navicons .bing { width: 38px; height: 38px; margin-left: 16px; }
.browser { flex: 1; min-height: 0; display: flex; }
.page { flex: 1; min-width: 0; display: flex; flex-direction: column; background: #444; border-top: 1px solid #999; font-size: 15px; }
.edgebar { width: 71px; background: #f7f7f7; display: flex; flex-direction: column; align-items: center; gap: 31px; padding: 17px 0; }
.edgebar svg { width: 22px; height: 22px; }
.edgebar hr { width: 36px; margin: auto 0 -12px; border: 0; border-top: 1px solid #bbb; }
.dark { color: #222; }

/* ---------- strategy builder ---------- */
.head { height: 94px; flex: none; display: grid; grid-template-columns: 25px 275px auto 1fr auto; grid-template-rows: 25px 1fr; background: linear-gradient(#666, #383838); box-shadow: inset 0 -1px #111; color: #c4c4c4; }
.brand { grid-row: 1 / 3; writing-mode: vertical-rl; transform: rotate(180deg); text-align: center; font: 17px/25px "DejaVu Sans", sans-serif; color: #777; }
.menu { grid-column: 2 / 5; display: flex; color: #222; }
.menu a { width: 114px; text-align: center; line-height: 22px; background: linear-gradient(#777, #999); border: solid #000; border-width: 0 1px 1px 0; }
.menu a:first-child { border-left: 1px solid #000; }
.dl { grid-column: 2; grid-row: 2; display: flex; gap: 5px; padding: 15px 0 0 65px; align-items: flex-start; }
.dl button { width: 58px; height: 34px; border: 2px solid #222; border-radius: 3px; background: linear-gradient(#6079a6, #40608f); font-weight: bold; font-size: 17px; line-height: 28px; color: #fff; text-shadow: 0 0 2px #000, 1px 1px 1px #000, -1px -1px 1px #000, 1px -1px 1px #000, -1px 1px 1px #000; }
.dl .mq { color: #ffe838; }
.events { grid-column: 3; grid-row: 2; align-self: end; height: 38px; background: #444; border: 1px solid #111; border-bottom: 0; border-radius: 20px 20px 0 0; padding: 0 17px 0 20px; display: flex; align-items: center; }
.events b { font-size: 16px; margin-right: 6px; width: 54px; }
.events button { height: 25px; padding: 0 12px; border: solid #555; border-width: 1px 1px 1px 0; background: linear-gradient(#a0a0a0, #777); font: 21px/22px "Liberation Serif", serif; color: #111; white-space: nowrap; }
.events .on { background: linear-gradient(#ff9060, #d84408); }
.events sub { font-size: 16px; line-height: 10px; color: #ffb890; }
.account { grid-column: 5; grid-row: 1 / 3; text-align: right; padding-right: 7px; }
.account p { margin: 0 0 7px; line-height: 21px; display: flex; gap: 12px; font-weight: bold; font-size: 14px; }
.c1 { color: #bf2; } .c2 { color: #ff5a3c; } .c3 { color: #8c8cff; }
.plan { display: flex; margin: 0 18px 6px 54px; height: 29px; border: 1px solid #333; line-height: 26px; background: #4c4c4c; font-size: 16px; }
.plan span { width: 23px; color: #3f3; text-align: center; font: bold 16px/26px "Liberation Serif", serif; background: #393939; }
.plan b, .hist { white-space: nowrap; }
.plan b { padding: 0 5px; }
.hist { font-weight: bold; font-size: 16px; margin-right: 18px; line-height: 22px; }
.work { flex: 1; min-height: 0; display: flex; }
.side { width: 300px; display: flex; flex-direction: column; gap: 3px; }
.side h1 { margin: 0 0 0 10px; font: italic 24px/27px "Liberation Serif", serif; color: #ccc; }
.bar { height: 28px; border-radius: 0 14px 14px 0; font-size: 17px; font-weight: bold; color: #bbb; display: flex; align-items: center; text-shadow: 1px 1px 1px #333; }
.bar i { width: 28px; padding-left: 10px; color: #e8a878; font: bold 18px "Liberation Serif", serif; }
.brown { background: #997755; } .slate { background: #555566; }
.olive { background: #556633; height: 30px; border-radius: 0 14px 0 0; justify-content: space-between; padding: 0 25px 0 23px; font-size: 16px; color: #ddd; }
.olive label { display: flex; align-items: center; gap: 9px; }
.olive input { appearance: none; width: 31px; height: 14px; border: 1px solid #222; border-radius: 6px; background: #666; }
.olive input:checked { background: #3c3; border-color: #999; }
.side-scroll { flex: 1; min-height: 0; display: flex; margin-top: -3px; overflow: hidden; }
.cats { flex: 1; min-width: 0; font-size: 17px; color: #111; }
.find { display: flex; align-items: center; gap: 6px; height: 32px; padding: 0 19px 0 4px; background: #666; font-size: 16px; border-bottom: 1px solid #333; }
.find input { flex: 1; min-width: 0; height: 20px; background: #333; border: 1px solid #555; border-radius: 3px; }
.cat { display: block; height: 32px; line-height: 30px; padding-left: 7px; border-bottom: 1px solid #0006; border-top: 1px solid #fff3; white-space: nowrap; }
.lt { color: #fff; text-shadow: 1px 1px 1px #333; }
.k-var { background: #555566; color: #bbb; } .k-cond { background: #ffd9a6; } .k-ind { background: #ffd35f; } .k-time { background: #aee17f; } .k-chk { background: #a9c8ff; }
.k-buy { background: linear-gradient(90deg, #008000 50%, #f00 50%); } .k-bucket { background: #5555ff; } .k-loop { background: #cc00cc; } .k-steel { background: #4682b4; } .k-coral { background: #ff7f50; } .k-out { background: #ffff55; }
.cats ul { margin: 0; padding: 0 0 0 4px; list-style: none; border-left: 10px solid #a9c8ff; background: #333; color: #ccc; line-height: 25px; white-space: nowrap; }
.cats li { height: 25px; }
.scroll { width: 22px; background: linear-gradient(90deg, #444, #666, #444); flex: none; border-right: 1px solid #333; }
.scroll i { display: block; height: 81%; background: linear-gradient(90deg, #555, #999, #555); }
.page-scroll { width: 23px; padding-top: 29px; }
.page-scroll i { height: 91%; }

.canvas { flex: 1; min-width: 0; position: relative; overflow: hidden; }
#edges { position: absolute; inset: 0; width: 100%; height: 100%; }
.wrench { position: absolute; right: 2px; top: 2px; width: 60px; height: 60px; border: 2px solid #333; border-radius: 8px; background: #777; }
.wrench svg { width: 56px; height: 56px; }
.node { position: absolute; display: flex; height: 22px; border-radius: 11px; background: #555; box-shadow: 0 0 8px #111; line-height: 20px; color: #aaa; font-size: 14px; }
.node span { text-align: center; }
.node b { font-weight: normal; font-size: 15px; border-radius: 11px; text-align: center; color: #333; white-space: nowrap; }
.node .w { color: #fff; text-shadow: 1px 1px 1px #222; }
.node .h { font-weight: bold; font-size: 14px; }

.win { position: absolute; background: #444; border: 2px solid #1c1c1c; border-radius: 6px; box-shadow: 0 0 10px #111; color: #c8c8c8; font-size: 15px; }
.win.close { left: 96px; top: 559px; width: 264px; padding: 0 3px 8px; }
.win.cond { left: 531px; top: 397px; width: 649px; padding: 0 3px 5px; }
.win-title { height: 28px; margin: 0 -3px 1px; display: flex; align-items: center; gap: 7px; padding-left: 6px; background: linear-gradient(#222, #666 50%, #222); border-bottom: 1px solid #111; }
.win-title svg { width: 30px; height: 24px; }
.win-title .x { width: 18px; height: 18px; }
.win-title span { margin-left: 12px; }
.vtab { position: absolute; left: 100%; top: 2px; width: 20px; height: 80px; line-height: 18px; writing-mode: vertical-rl; text-align: center; background: #556; border: 1px solid #222; border-left: 0; border-radius: 0 6px 6px 0; font-size: 15px; }
.win fieldset { margin: 0 0 1px; padding: 0; border: 1px solid #3b3b26; border-radius: 6px 6px 0 0; min-width: 0; }
.win legend { float: left; width: 100%; padding: 0; height: 17px; text-align: center; font: bold 10px/17px "DejaVu Sans", sans-serif; color: #8a8a7c; background: linear-gradient(#55554a, #44443c); border-bottom: 1px solid #3b3b26; border-radius: 6px 6px 0 0; text-shadow: 1px 1px 1px #111; }
.win .lit legend { color: #c4c49a; height: 15px; line-height: 15px; background: linear-gradient(#44443a, #333322); }
.win .row { clear: both; display: flex; align-items: center; height: 25px; gap: 4px; }
.win .row.r3 { height: 23px; }
.win .row label { background: #55554b; align-self: stretch; line-height: 23px; padding-left: 6px; margin-right: auto; color: #aaa; text-shadow: 1px 1px 1px #222; white-space: nowrap; }
.r1 label { width: 132px; } .r2 label { width: 109px; } .r3 label { width: 158px; } .r4 label { width: 98px; }
.r1, .r2 { padding-right: 4px; }
.row em { font-style: normal; color: #777; font-size: 14px; width: 32px; }
.row input[type=text] { width: 30px; height: 22px; background: #333; border: 1px solid #111; border-radius: 4px; padding-left: 5px; color: #ddd; }
.win input[type=checkbox] { appearance: none; width: 14px; height: 14px; background: #555; border: 1px solid #2b2b2b; border-radius: 3px; flex: none; position: relative; }
.win input[type=checkbox]:checked::after { content: "✓"; position: absolute; left: 1px; top: -6px; color: #111; font-size: 14px; font-weight: bold; }
.win .dim { opacity: .15; }
.pick { position: relative; display: inline-flex; height: 23px; background: #333; border: 1px solid #111; border-radius: 4px; color: #ddd; }
.pick select { appearance: none; padding: 0 27px 0 6px; line-height: 20px; }
.pick::after { content: "▼"; position: absolute; right: 0; top: 0; width: 22px; height: 21px; background: linear-gradient(#555, #3a3a3a); border-left: 1px solid #111; color: #1a1a1a; font-size: 10px; line-height: 20px; text-align: center; pointer-events: none; }
.pink { background: #ff1493; color: #fff; }
.teal { background: #445555; border: 1px solid #3b3b26; }
.close .teal { height: 30px; margin-top: 7px; }
.cond .teal { height: 30px; margin: 12px 0 7px; display: flex; align-items: center; padding-left: 4px; color: #8fa5a0; }
.cond .teal label { width: 143px; }
.win .teal input.white { background: #fff; margin-right: 11px; border-color: #eee; }
.cond .teal input[type=text] { width: 63px; height: 22px; background: #666; border: 1px solid #222; border-radius: 4px; }
.ops { display: grid; grid-template-columns: 271px 74px 271px; column-gap: 7px; padding-left: 4px; }
.cap { text-align: center; color: #777; font-size: 14px; line-height: 12px; }
.cmp { appearance: none; height: 38px; border: 2px solid #1c1c1c; border-radius: 4px; font-size: 20px; padding-left: 18px; color: #ddd; background: #333; background-image: linear-gradient(-45deg, transparent 40%, #ccc 40%, #ccc 60%, transparent 60%), linear-gradient(45deg, transparent 40%, #ccc 40%, #ccc 60%, transparent 60%); background-size: 6px 6px; background-position: 58px 15px, 53px 15px; background-repeat: no-repeat; }
.operand { background: #444450; border: 1px solid #2c2c34; border-radius: 3px; padding: 3px 4px 5px 0; }
.operand > .pick { display: flex; width: max-content; margin-bottom: 2px; border-radius: 0; }
.fn { width: 20px; margin: 1px; background: #fc3; color: #222; font: italic bold 16px/18px "Liberation Serif", serif; text-align: center; }
.win .operand .row { padding: 0 4px 0 5px; gap: 3px; }
.win .operand .row label { background: none; padding: 0; color: #ccc; }
.operand .params { padding-top: 1px; }
.operand fieldset { margin: 2px 3px 0 5px; border-color: #33333c; background: #556; }
.win .operand .row.in { padding: 0 2px 0 3px; }
.operand legend, .win .operand .lit legend { background: linear-gradient(#4a4a5c, #3a3a48); font: bold 11px/17px "Noto Sans", sans-serif; height: 17px; }
.actions { display: flex; gap: 65px; padding: 0 26px 0 30px; }
.actions button { height: 23px; border: 1px solid #1c1c1c; border-radius: 6px; background: linear-gradient(#505050, #3a3a3a); line-height: 20px; }
.actions .update { flex: 274; color: #3a3; }
.actions .delete { flex: 244; color: #c00; }
```

FILE: app.js
```js
const $ = (s) => document.querySelector(s);

/* toolbars: [icon, kind] — "|" is a divider, "||" a divider with a drag grip */
const icon = (id) => `<svg class="ic"><use href="#i-${id}"/></svg>`;
const btn = ([id, kind = "", text = ""]) => id === "|" ? "<i></i>" : id === "||" ? '<i class="grip"></i>' : `<button class="${kind}" aria-label="${text || id}">${id.startsWith("=") ? id.slice(1) : icon(id)}${text}</button>`;
$("#toolbar1").innerHTML = [["plus-chart", "drop"], ["profiles", "drop"], ["|"], ["watch", "on"], ["target"], ["star-folder"], ["panel", "on"], ["tester", "on"], ["|"], ["order", "text", "New Order"], ["diamond"], ["cloud"], ["signal"], ["auto", "text", "AutoTrading"], ["||"], ["bars"], ["candle", "on"], ["line"], ["|"], ["zin"], ["zout"], ["tile"], ["|"], ["scroll", "on"], ["shift"], ["|"], ["ind", "drop"], ["clock", "drop"], ["tpl", "drop"]].map(btn).join("");
$("#toolbar2").innerHTML = [["cursor"], ["cross", "on"], ["|"], ["vl"], ["hl"], ["tl"], ["eq"], ["fib"], ["=<b>A</b>"], ["=<b>T</b>"], ["shapes", "drop"], ["||"], ["=M1", "on"], ["=M5"], ["=M15"], ["=M30"], ["=H1"], ["=H4"], ["=D1"], ["=W1"], ["=MN"]].map(btn).join("");

/* quotes */
const quotes = `100GBP 7861.9 7864.5 u|200AUD 7364.7 7368.2 d|225JPY 29060 29075 d|D30EUR 15970.7 15981.1 u|E35EUR 9245.8 9251.9 u|E50EUR 4372.3 4374.0 d|F40EUR 7494.0 7496.5 d|H33HKD 20051.0 20058.0 u|H50HKD 20062.5 20067.5 d|NASUSD 13253.3 13254.8 d|SPXUSD 4174.9 4175.9 d|U30USD 34117 34123 u|XAGUSD 25.035 25.058 u|USOUSD 76.44 76.71 u|XNGUSD 2.438 2.471 u|USDCAD 1.35424 1.35538 u|USDCHF 0.89388 0.89479 d|GBPJPY 171.039 171.207 d|GBPCAD 1.70144 1.70299 u|GBPCHF 1.12330 1.12450 u|GBPAUD 1.89850 1.90060 u|EURJPY 149.999 150.121 d|EURGBP 0.87638 0.87698 d|EURCAD 1.49168 1.49312 d|EURAUD 1.66454 1.66626 d|CHFJPY 152.300 152.455 u`;
$("#quotes").innerHTML = quotes.split("|").map((q, i) => {
  const [s, bid, ask, d] = q.split(" ");
  const arrow = d === "u" ? '<path d="M6 0l6 6H9v7H3V6H0z" fill="#2fc23c" stroke="#0b7a17"/>' : '<path d="M6 13l6-6H9V0H3v7H0z" fill="#f0592b" stroke="#a02c0c"/>';
  return `<tr class="${d === "u" ? "rise" : "fall"} ${i < 12 ? "tan" : i === 13 ? "hot" : ""}"><td><svg viewBox="-1 -1 14 15">${arrow}</svg>${s}</td><td class="n">${bid}</td><td class="n">${ask}</td></tr>`;
}).join("");

/* tester results */
const trades = [[77, "01", "953"], [78, "03", "903"], [79, "04", "843"], [80, "05", "822"], [81, "06", "807"], [82, "07", "822"], [83, "08", "819"], [84, "09", "809"], [85, "17", "822"], [86, "18", "814"], [87, "19", "809"]];
$("#results").innerHTML = trades.map(([n, m, p]) => `<tr><td><svg><use href="#i-doc"/></svg>${n}</td><td>2023.04.26 03:${m}</td><td>sell</td><td>${n}</td><td>0.01</td><td>165.${p}</td><td>166.${p}</td><td>150.${p}</td><td></td><td></td></tr>`).join("");

/* chart */
const closes = [620, 651, 648, 680, 684, 685, 685, 685, 684, 457, 511, 605, 600, 582, 586, 539, 537, 534, 515, 490, 541, 542, 564, 586, 541, 586, 613, 595, 620, 625, 605, 604, 628, 612, 617, 541, 523, 500, 521, 540, 535, 552, 524, 514, 554, 532, 542, 520, 490, 488, 515, 506, 502, 498, 534, 515, 518, 542, 559, 545, 543, 562, 579, 574, 604, 574, 554, 566, 570, 582, 685, 720, 760, 772, 770, 762, 757, 760, 748, 687, 672, 660, 645, 633, 645, 617, 595, 615, 585, 600, 606, 604, 606, 604, 606, 604, 623, 636, 640, 645, 635, 634, 608, 592, 605, 590, 578,
  570, 597, 636, 618, 575, 603, 620, 622, 640, 645, 617, 645, 668, 665, 683, 682, 657, 663, 658, 668, 633, 608, 660, 622, 729, 803, 837, 858, 833, 842, 855, 803, 780, 772, 768, 803, 778, 788, 836, 846, 856, 848, 835, 840, 872, 843, 850, 784, 797, 823, 868, 872, 880, 924, 899, 864, 836, 883, 912, 886, 796, 780, 758, 745, 735, 768, 770, 788, 752, 699, 735, 717, 699, 683, 699, 708, 726, 788, 803, 756, 733, 684, 685, 716, 706, 708, 717, 690, 698, 708, 672, 667, 699, 716, 726, 731, 756, 768, 801, 808, 821, 809, 846, 824, 806, 801, 788, 741, 739, 770, 763, 793, 905, 852, 776, 785, 815, 851, 814, 857, 856, 824, 888, 837, 876, 867, 892, 970, 993, 935, 918, 935, 982, 1035, 1060, 1071, 997, 975, 915, 902, 885, 925];
const macd = "0:80,2:95,4:120,6:145,8:158,9:85,10:45,12:55,14:48,16:25,18:5,19:-18,21:-10,22:12,23:38,24:40,26:80,28:118,29:132,31:150,32:160,34:170,35:155,36:125,37:100,38:85,40:78,42:80,43:70,46:83,47:80,49:58,53:62,55:75,57:97,59:118,61:135,62:155,64:185,65:188,67:182,69:188,70:225,72:310,73:350,74:377,75:390,77:403,78:400,79:375,80:345,82:285,84:235,86:182,88:148,89:130,91:115,93:108,95:108,99:137,101:147,102:142,103:128,106:105,107:95,108:98,109:115,111:108,113:120,115:140,116:153,118:158,119:178,122:210,126:207,128:180,130:172,131:197,132:243,133:293,134:333,135:357,137:392,139:368,141:330,143:315,145:310,147:328,153:310,154:280,156:252,158:265,161:297,163:270,165:275,166:268,167:238,168:205,169:168,170:135,171:105,174:88,176:55,178:38,179:22,181:5,182:8,183:18,184:45,185:75,187:85,188:65,190:52,192:62,196:60,198:48,200:68,202:95,204:133,205:163,207:210,209:245,210:253,213:238,215:197,217:185,218:190,219:230,220:243,222:210,225:228,229:248,231:243,233:262,234:295,235:325,236:328,238:320,239:335,241:390,242:410,244:380,246:305,247:270,248:253";
const signal = "0:113,2:100,4:98,6:103,8:120,9:122,11:115,13:98,15:75,17:48,19:28,21:15,23:12,25:15,27:32,29:60,31:90,33:120,35:142,36:145,38:138,40:122,42:100,44:82,49:76,54:68,56:68,58:78,60:92,64:130,66:152,70:185,72:215,74:260,76:310,78:348,80:370,82:365,84:340,86:300,88:245,90:190,92:155,94:132,96:118,98:118,103:130,105:134,111:112,113:112,117:128,121:158,123:178,127:200,131:192,133:210,135:240,137:280,139:325,141:352,143:355,147:328,151:318,153:318,157:290,161:273,164:272,166:275,168:265,170:235,172:198,174:155,176:112,178:80,180:52,182:35,183:30,185:33,189:50,191:62,193:68,197:58,199:58,203:72,205:90,207:122,209:160,211:195,213:222,215:232,219:213,223:210,229:230,233:243,237:282,241:330,243:357,244:362,246:357,248:345";
const rsi = "0:572,1:600,2:602,3:626,4:618,5:627,8:627,9:514,10:548,11:597,13:587,14:588,15:572,18:567,19:556,20:583,21:586,23:608,24:590,25:613,26:622,27:613,28:625,31:612,32:625,33:615,34:620,35:582,37:568,39:590,41:592,43:578,44:605,46:595,48:572,49:570,50:587,53:582,54:605,56:597,58:625,59:612,60:612,62:638,63:630,64:648,66:610,68:620,69:627,70:672,71:685,73:697,75:690,77:688,78:675,79:628,81:615,83:597,84:602,86:575,87:590,88:575,90:587,94:587,96:597,97:615,99:622,101:615,102:588,103:575,104:588,106:570,107:563,109:625,110:610,111:582,112:603,114:615,116:632,117:610,118:625,119:643,120:637,122:650,123:625,125:622,126:630,127:605,128:587,129:617,130:600,131:650,132:672,134:685,135:670,137:674,138:648,139:632,141:627,142:641,143:630,144:635,145:650,147:658,149:643,151:657,152:640,153:637,154:603,156:625,158:645,160:662,162:630,163:613,165:643,166:632,167:592,169:577,171:570,173:587,174:597,176:563,177:578,179:567,180:563,182:577,183:590,184:618,185:628,186:603,188:573,189:577,190:592,191:585,193:593,195:580,196:588,198:570,199:590,201:610,203:618,205:650,207:662,208:652,209:667,211:637,213:622,214:592,215:593,216:610,217:605,218:630,219:672,221:605,222:607,224:633,225:618,226:632,228:620,229:642,230:622,231:632,233:640,234:662,235:665,236:640,238:632,240:665,242:675,243:642,244:630,245:605,247:597,248:608";
const atr = "0:722,2:762,4:745,6:742,8:752,9:650,11:587,13:550,16:505,18:505,20:475,22:458,23:547,25:587,26:597,27:592,28:605,29:625,30:633,33:635,34:655,35:637,37:642,39:652,41:658,45:652,47:658,48:652,49:668,51:680,53:692,55:682,56:687,57:682,58:690,61:692,63:700,65:685,67:680,68:692,69:685,70:657,72:645,74:635,78:638,79:633,80:638,82:628,83:643,84:670,86:680,90:682,92:677,93:690,96:695,98:699,99:692,101:702,103:698,105:702,107:698,108:695,109:682,112:662,113:668,115:655,116:655,118:635,120:628,122:632,124:648,126:655,129:655,130:630,131:595,132:580,134:565,136:553,137:557,139:540,140:535,141:542,142:535,143:540,144:555,146:597,149:635,151:630,153:637,154:622,156:627,158:628,159:637,162:603,164:592,166:585,167:550,168:555,169:545,171:545,173:550,177:555,178:567,180:560,181:590,183:590,186:560,188:555,190:570,192:563,194:578,197:597,199:610,201:628,204:643,205:632,209:630,212:633,213:643,214:633,217:633,218:628,219:575,221:542,223:527,226:512,228:510,229:493,231:483,232:492,233:553,234:550,235:568,236:555,238:558,239:538,241:533,242:545,244:543,246:522,247:527,248:535";
const points = (s) => s.split(",").map((p) => p.split(":").map(Number));
const X = (i) => 2 + 6.4 * i;
const low = (v) => 279 + v / 3;
const poly = (s, color) => `<polyline points="${points(s).map(([i, v]) => X(i).toFixed(1) + "," + low(v).toFixed(1)).join(" ")}" fill="none" stroke="${color}"/>`;
const label = (x, y, s, extra = 'fill="#ddd"') => `<text x="${x}" y="${y}" ${extra}>${s}</text>`;
const R = 1593;
let g = "";
for (let x = 40.4; x < R; x += 38.4) g += `<path d="M${Math.round(x) + .5} 0V538" stroke="#5a6977" stroke-dasharray="6 4"/>`;
["166.205", "166.115", "166.025", "165.935", "165.845", "165.755", "165.665"].forEach((t, i) => {
  const y = Math.round(4 + i * 40.8) + .5;
  g += `<path d="M0 ${y}H${R}" stroke="#667788" stroke-dasharray="2 2"/>` + label(R + 6, y + 4, t);
});
[328.5, 459.5, 504.5, 536.5].forEach((y, i) => { g += `<path d="M0 ${y}H${R}" stroke="${i ? "#999" : "#667788"}" stroke-dasharray="2 2"/>`; });
closes.forEach((c, i) => {
  const o = i ? closes[i - 1] : 614;
  const up = c <= o;
  const t = Math.min(o, c) / 3 - 101, b = Math.max(o, c) / 3 - 101;
  const hi = i === 9 ? 33 : (i * 7) % 5 * 1.3, lo = i === 11 ? 17 : i === 219 ? 33 : i === 99 ? 13 : (i * 11) % 6 * 1.3;
  g += `<path d="M${X(i)} ${t - hi}V${b + lo}" stroke="${up ? "#0b8f0b" : "#d00000"}"/><rect x="${X(i) - 2}" y="${t}" width="4" height="${Math.max(1, b - t)}" fill="${up ? "#5be000" : "#ff3000"}"/>`;
});
const m = points(macd);
for (let i = 0, k = 0; i < 249; i++) {
  while (k < m.length - 2 && m[k + 1][0] < i) k++;
  const [a, va] = m[k], [b, vb] = m[k + 1];
  const v = va + (vb - va) * (i - a) / (b - a);
  g += `<path d="M${X(i)} 328.500V${low(v)}" stroke="#c0c0c0" stroke-width="2"/>`;
}
g += poly(signal, "#e00000") + poly(rsi, "#1e78d0") + poly(atr, "#d8d820");
g += `<path d="M0 265.500H1643M0 267.500H1643M0 422.500H1643M0 424.500H1643M0 538.500H${R}M${R}.500 0V539" stroke="#ccc"/>`;
g += `<path d="M0 224H${R}M883.500 0V539" stroke="#e0e0e0"/>`;
g += label(15, 12, "GBPJPY,M1 &#160;171.132 171.147 171.039 171.039") + '<path d="M4 6h8l-4 5z" fill="#fff"/>';
g += label(4, 279, "MACD(12,26,9) -0.0033 0.0031") + label(4, 437, "RSI(14) 38.8942 &#160;ATR(14) 0.039");
g += label(R + 4, 278, "0.0314") + label(R + 4, 332, "0.00") + label(R + 4, 420, "-0.0484") + label(R + 4, 435, "100") + label(R + 4, 463, "70") + label(R + 4, 508, "30") + label(R + 4, 536, "0");
for (let i = 0; i < 21; i++) {
  const t = 51 + i * 12, h = String(Math.floor(t / 60)).padStart(2, "0");
  if (i !== 11) g += label(Math.round(1 + 76.8 * i), 551, i ? `26 Apr ${h}:${String(t % 60).padStart(2, "0")}` : "26 Apr 2023");
}
g += '<path d="M842 542h82v12h-82zM1595 218h45v12h-45z" fill="#fff"/>' + label(846, 551, "2023.04.26 3:09", 'fill="#000"') + label(R + 6, 228, "165.718", 'fill="#000"');
$("#chart").innerHTML = g;

/* browser tabs */
const Q = `<svg style="color:#1f7fd0"><use href="#i-mag"/></svg>`;
const T = (t, bg, c = "#fff") => `<span style="background:${bg};color:${c}">${t}</span>`;
const S = (s) => `<svg viewBox="0 0 20 20">${s}</svg>`;
const tube = S('<rect y="3" width="20" height="14" rx="3" fill="#f00"/><path d="M8 7l5 3-5 3z" fill="#fff"/>');
const favs = [
  S('<path d="M2 8h8v10H2zM8 2h10v10H8z" fill="none" stroke="#2a8fd8" stroke-width="3"/>'), T("K", "#1aa883"), T("M", "#5a2a8c", "#ffd28a"),
  S('<circle cx="10" cy="8" r="8" fill="#5563d8"/><rect y="8" width="20" height="10" rx="4" fill="#e02020"/><text x="2" y="16" font-size="8" fill="#fff">928</text>'),
  S('<path d="M0 0h20v20H0z" fill="#222"/><path d="M12 2q-7 8-4 16 8-3 4-16z" fill="#e22"/>'), '<svg style="color:#444"><use href="#i-gear"/></svg>', "X",
  S('<path d="M10 1l8 5v8l-8 5-8-5V6z" fill="#222"/><circle cx="10" cy="10" r="4" fill="#fff"/>'), T("STEX", "#222"), S('<circle cx="10" cy="10" r="7" fill="none" stroke="#b5762a" stroke-width="4" stroke-dasharray="3 2"/>'),
  S('<path d="M4 19Q4 4 17 1q0 12-11 13" fill="#27b845"/>'), S('<circle cx="10" cy="10" r="10" fill="#fff"/><path d="M15 6a6 6 0 1 0 0 8" fill="none" stroke="#1652f0" stroke-width="4"/>'),
  S('<circle cx="10" cy="10" r="10" fill="#1877f2"/><path d="M11 19v-8h3V8h-3q0-3 3-3V3q-6-1-6 5H6v3h2v8z" fill="#fff"/>'), S('<path d="M2 9l6 8L19 1 8 12z" fill="#2a8fd8"/>'), T("Є", "#e8f5ec", "#0f8f3c"), T("FRB", "#0a2f6c"),
  Q, Q, Q, Q, T("DFX", "#f57c1c"), S('<path d="M1 16q7 1 8-4-6-1-7-8 4 4 8 4 0-6 6-5l4 0-2 4q0 12-12 12z" fill="#1d9bf0"/>'), Q,
  S('<circle cx="10" cy="10" r="9" fill="#334"/><path d="M6 13l7-6M9 15h5M9 4h4" stroke="#fff" stroke-width="2"/>'), S('<circle cx="10" cy="10" r="9" fill="#344"/><circle cx="10" cy="9" r="4" fill="#ddd"/>'),
  T("[as]", "#222"), S('<circle cx="10" cy="10" r="9" fill="#3c8f3c"/><path d="M4 15l6-11 6 11z" fill="#dfeedd"/>'), tube, tube, Q,
  S('<path d="M0 0h20v20H0z" fill="#1e78b0"/><path d="M2 18Q4 4 18 2M8 18q2-8 10-10" stroke="#fff" stroke-width="2" fill="none"/>'), Q, T("FRB", "#0a2f6c"), S('<path d="M5 1h8q5 3 1 8l-5 2-1 8H3z" fill="#0a4c9c"/>'), Q, Q,
  T("N", "#fff", "#0c8aa8"), T("FXS", "#fff", "#555"), S('<path d="M14 2L6 6l8 6-8 6" stroke="#3272b8" stroke-width="3" fill="none"/>'), T("TWC", "#1740a0"), T("C", "#eee", "#e02020"), T("≋", "#d8202c"), Q,
  S('<path d="M4 8q2-8 10-6l2 4-4 3q2 6-4 10l-2-8z" fill="#e8b430"/><path d="M3 7q4-7 13-5l-3 4z" fill="#1b8f3a"/>')];
const live = [6, 7, 28, 42, 43];
$("#favs").innerHTML = favs.map((f, i) => i === 6 ? '<a href="#" class="on">✕</a>' : `<a href="#" aria-label="Tab ${i + 1}"><div class="${live.includes(i) ? "" : "fade"}">${f}</div></a>`).join("");

/* taskbar apps */
const apps = [["start", "first"], ["mag", "first"], ["view"], ["doc", "focus"], ["folder"], ["store"], ["mail"], ["excel", "open"], ["c", "open"], ["mt", "open"], ["photo", "open"]];
document.querySelectorAll("[data-apps]").forEach((el) => {
  el.innerHTML = apps.map(([id, c = ""]) => `<button class="${c}" aria-label="${id}"><svg style="color:#fff"><use href="#t-${id}"/></svg>${id === "mail" ? '<i class="badge">6</i>' : ""}</button>`).join("");
});

/* builder graph, in canvas coordinates: id, x, y, id width, body width, text, colour, class, in-port, out-ports */
const O = "#ff6000", Y = "#f0c000", G = "#909090";
const nodes = [
  [1, 607, 11, 17, 107, "Once per bar", "#aee17f", "", 668, [[668, O], [699, Y]]],
  [40, 620, 92, 23, 84, "Condition", "#ffd9a6", "", 673, [[673, O], [700, Y]]],
  [46, 425, 180, 24, 84, "Condition", "#ffd9a6", "", 479, [[479, O], [506, Y]]],
  [47, 800, 186, 24, 84, "Condition", "#ffd9a6", "", 854, [[854, O], [881, Y]]],
  [7, 419, 292, 17, 76, "Buy now", "#008000", "w h", 465, [[465, O], [488, G]]],
  [8, 844, 286, 17, 73, "Sell now", "#ff0000", "w h", 889, [[889, O], [912, G]]],
  [48, 394, 411, 24, 84, "Condition", "#ffd9a6", "", 448, [[448, O], [475, Y]]],
  [42, 381, 548, 25, 101, "Close trades", "#4682b4", "w", 444, [[444, O]]],
];
const edges = [[668, 43, 673, 83, O], [673, 123, 479, 170, O], [700, 123, 854, 176, Y], [479, 211, 465, 282, O], [854, 217, 889, 276, O], [465, 323, 448, 401, O], [889, 317, 916, 388, O], [448, 442, 444, 538, O]];
const dome = (x, y, c, dir) => `<path d="M${x - 10} ${y}a10 10 0 0 ${dir ? 1 : 0} 20 0z" fill="${c}"/>`;
let e = '<defs>' + edges.map(([x1, y1, x2, y2, c], i) => `<linearGradient id="e${i}" gradientUnits="userSpaceOnUse" x1="0" y1="${y1}" x2="0" y2="${y2}"><stop offset="0.1" stop-color="${c}"/><stop offset="0.9" stop-color="#f4e6f4"/></linearGradient>`).join("") + "</defs>";
edges.forEach(([x1, y1, x2, y2], i) => {
  const h = (y2 - y1) / 2;
  e += `<path d="M${x1} ${y1}C${x1} ${y1 + h} ${x2} ${y2 - h} ${x2} ${y2}" fill="none" stroke="url(#e${i})" stroke-width="2"/>`;
});
nodes.forEach((n) => {
  e += dome(n[8], n[2], "#dccfdc", 1);
  n[9].forEach(([x, c]) => { e += dome(x, n[2] + 22, c, 0); });
});
e += dome(916, 397, "#dccfdc", 1);
$("#edges").innerHTML = e;
$("#edges").insertAdjacentHTML("afterend", nodes.map(([id, x, y, iw, bw, t, c, k]) => `<div class="node" style="left:${x}px;top:${y}px"><span style="width:${iw}px">${id}</span><b class="${k}" style="width:${bw}px;background:${c}">${t}</b></div>`).join(""));

/* operand panels */
document.querySelectorAll(".operand").forEach((el) => {
  const s = el.dataset.side;
  const text = (n, v, mark = "", cls = "") => `<div class="row ${cls}"><label for="${s}-${n}">${n}</label><input id="${s}-${n}" type="text" value="${v}"><input type="checkbox" ${mark} aria-label="${n} option"></div>`;
  const pick = (n, v, mark = "", cls = "") => `<div class="row ${cls}"><label for="${s}-${n}">${n}</label><span class="pick"><select id="${s}-${n}"><option>${v}</option></select></span><input type="checkbox" ${mark} aria-label="${n} option"></div>`;
  el.innerHTML = `<span class="pick"><i class="fn">f</i><select aria-label="Operand type"><option>Indicator</option></select></span><span class="pick"><select aria-label="Indicator"><option>MACD</option></select></span>
  <div class="params">${text("Fast EMA Period", 12)}${text("Slow EMA Period", 26)}${text("Signal Period", 9)}${pick("Applied price", "Close price")}${pick("MACD Mode", "Main line")}</div>
  <fieldset><legend>More settings</legend>${text("Symbol", "", 'class="dim"', "in")}${pick("Timeframe", "Current", "checked", "in")}${text("Candle ID", el.dataset.candle, "checked", "in")}</fieldset><fieldset class="lit"><legend>Adjust</legend></fieldset>`;
});
```
